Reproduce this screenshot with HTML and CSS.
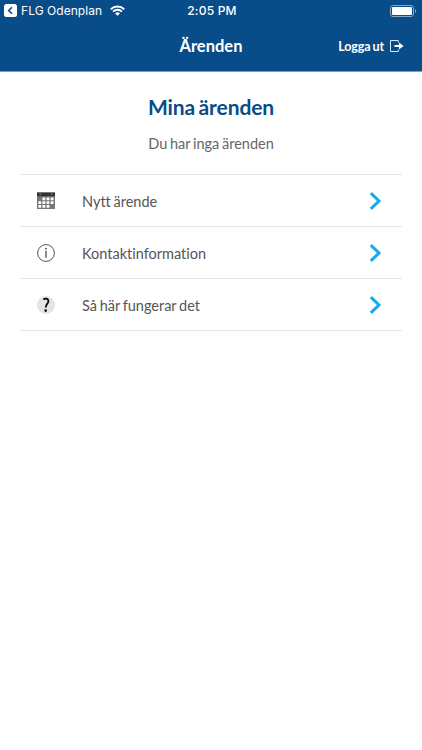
FILE: index.html
```html
<!DOCTYPE html>
<html lang="sv">
<head>
  <meta charset="utf-8">
  <title>Ärenden</title>
  <link rel="stylesheet" href="styles.css">
</head>
<body>
  <header class="header">
    <div class="status-bar">
      <div class="status-left">
        <svg class="back-icon" width="13" height="13" viewBox="0 0 13 13">
          <rect width="13" height="13" rx="2.5" fill="#fff"/>
          <path d="M8 3.2 4.7 6.5 8 9.8" fill="none" stroke="#084c89" stroke-width="1.6"/>
        </svg>
        <span class="back-app">FLG Odenplan</span>
        <svg class="wifi-icon" width="15" height="11" viewBox="0 0 15 11">
          <path d="M.8 4.2a9.6 9.6 0 0 1 13.4 0M3.1 6.6a6.3 6.3 0 0 1 8.8 0" fill="none" stroke="#fff" stroke-width="1.9"/>
          <path d="M7.5 10.8 5.1 8.4a3.4 3.4 0 0 1 4.8 0z" fill="#fff"/>
        </svg>
      </div>
      <div class="status-time">2:05 PM</div>
      <div class="status-right">
        <svg width="27" height="12" viewBox="0 0 27 12">
          <rect x=".5" y=".5" width="23" height="11" rx="2.5" fill="none" stroke="#86a7c6"/>
          <rect x="2" y="2" width="20" height="8" rx="1" fill="#fff"/>
          <path d="M25 4v4c1.6-.7 1.6-3.3 0-4z" fill="#86a7c6"/>
        </svg>
      </div>
    </div>
    <div class="nav-bar">
      <h1 class="nav-title">Ärenden</h1>
      <a class="logout">
        <span>Logga ut</span>
        <svg width="14" height="12" viewBox="0 0 14 12">
          <path d="M8.3 2.6V.5H.5v11h7.8V9.4" fill="none" stroke="#dce6ef" stroke-width="1"/>
          <path d="M4.5 5h4.5V2.6L13.6 6 9 9.4V7H4.5z" fill="#fff"/>
        </svg>
      </a>
    </div>
  </header>

  <main class="content">
    <h2 class="page-title">Mina ärenden</h2>
    <p class="page-text">Du har inga ärenden</p>

    <ul class="menu">
      <li class="menu-item">
        <svg class="menu-icon" width="18" height="18" viewBox="0 0 18 18">
          <path d="M0 .5h18v16.5H0z" fill="#777"/>
          <path d="M0 .5h18v3.7H0z" fill="#333"/>
          <path d="M2.5 2.2h1.6M13.9 2.2h1.6" stroke="#999" stroke-width="1"/>
          <path d="M5.5 6.8h11.2M1.4 10.6h15.3M1.4 14.4h11.2" stroke="#fff" stroke-width="2.7" stroke-dasharray="2.8 1.3"/>
        </svg>
        <span class="menu-label">Nytt ärende</span>
        <svg class="chevron" width="12" height="18" viewBox="0 0 12 18">
          <path d="M.8 1.2 9 9 .8 16.8" fill="none" stroke="#14aaee" stroke-width="3"/>
        </svg>
      </li>
      <li class="menu-item">
        <svg class="menu-icon" width="18" height="18" viewBox="0 0 18 18">
          <circle cx="9" cy="9" r="8.4" fill="none" stroke="#555" stroke-width="1"/>
          <circle cx="9" cy="4.6" r=".9" fill="#444"/>
          <path d="M9 6.8v7" fill="none" stroke="#555" stroke-width="1.4"/>
        </svg>
        <span class="menu-label">Kontaktinformation</span>
        <svg class="chevron" width="12" height="18" viewBox="0 0 12 18">
          <path d="M.8 1.2 9 9 .8 16.8" fill="none" stroke="#14aaee" stroke-width="3"/>
        </svg>
      </li>
      <li class="menu-item">
        <svg class="menu-icon" width="18" height="18" viewBox="0 0 18 18">
          <circle cx="9" cy="9" r="9" fill="#e4e4e4"/>
          <path d="M6.4 3.4C8.6 1.8 11.4 2.6 11.4 5.2c0 2.5-2.7 2.8-2.7 6.4" fill="none" stroke="#000" stroke-width="1.8"/>
          <circle cx="8.7" cy="14.6" r="1.3" fill="#000"/>
        </svg>
        <span class="menu-label">Så här fungerar det</span>
        <svg class="chevron" width="12" height="18" viewBox="0 0 12 18">
          <path d="M.8 1.2 9 9 .8 16.8" fill="none" stroke="#14aaee" stroke-width="3"/>
        </svg>
      </li>
    </ul>
  </main>
</body>
</html>
```

FILE: styles.css
```css
body {
  margin: 0;
  background-color: #fff;
  font-family: Lato, sans-serif;
  font-variant-ligatures: none;
  color: #555;
}

.header {
  height: 72px;
  background-color: #084c89;
  border-bottom: 1px solid #839fbe;
  box-sizing: border-box;
  color: #fff;
}

.status-bar {
  display: grid;
  grid-template-columns: 1fr auto 1fr;
  align-items: center;
  height: 21px;
  padding: 0 5px 0 4px;
  font-family: Inter, sans-serif;
  font-size: 12px;
}

.status-left {
  display: flex;
  align-items: center;
}

.back-app {
  margin-left: 4px;
  letter-spacing: 0.05px;
}

.wifi-icon {
  margin-left: 8px;
}

.status-time {
  padding-left: 3px;
  font-weight: 500;
  letter-spacing: 0.2px;
}

.status-right {
  display: flex;
  justify-content: flex-end;
}

.nav-bar {
  display: grid;
  grid-template-columns: 1fr auto 1fr;
  align-items: center;
  height: 50px;
  padding: 0 18px;
}

.nav-title {
  grid-column: 2;
  margin: 0;
  font-size: 16.5px;
  font-weight: bold;
}

.logout {
  display: flex;
  align-items: center;
  justify-content: flex-end;
  gap: 6px;
  font-size: 12.5px;
  font-weight: bold;
  letter-spacing: -0.1px;
  word-spacing: -1px;
}

.content {
  padding: 20px 20px 0;
}

.page-title {
  margin: 0;
  font-size: 21px;
  line-height: 30px;
  letter-spacing: -0.1px;
  word-spacing: -1.5px;
  text-align: center;
  color: #084c89;
}

.page-text {
  margin: 12px 0 20px;
  font-size: 14.5px;
  line-height: 20px;
  word-spacing: -1px;
  text-align: center;
  color: #666;
}

.menu {
  margin: 0;
  padding: 0;
  list-style: none;
  border-top: 1px solid #e6e6e6;
}

.menu-item {
  display: flex;
  align-items: center;
  height: 52px;
  padding: 0 20px 0 17px;
  border-bottom: 1px solid #e6e6e6;
  box-sizing: border-box;
}

.menu-label {
  flex: 1;
  margin-left: 27px;
  padding-top: 1px;
  font-size: 14.5px;
  word-spacing: -1px;
}
```
